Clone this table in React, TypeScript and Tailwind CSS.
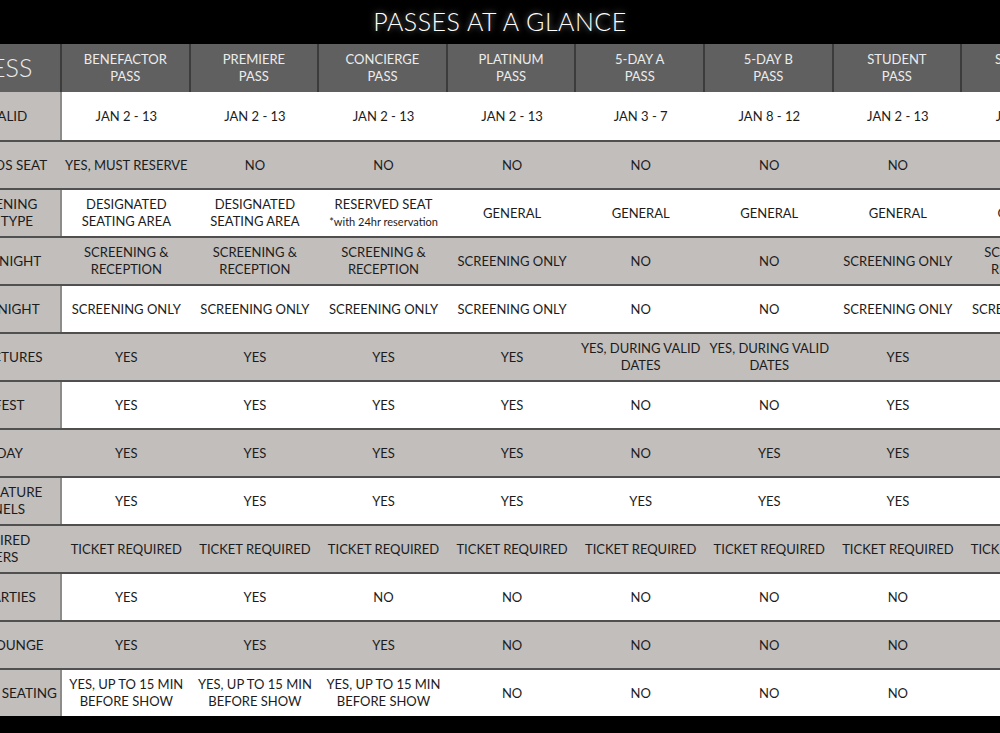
import React from 'react';

type Cell = string | { main: string; note: string };

const passes = [
  ['BENEFACTOR', 'PASS'],
  ['PREMIERE', 'PASS'],
  ['CONCIERGE', 'PASS'],
  ['PLATINUM', 'PASS'],
  ['5-DAY A', 'PASS'],
  ['5-DAY B', 'PASS'],
  ['STUDENT', 'PASS'],
  ['SPONSOR', 'PASS'],
];

// pad: nudges the label inside the (cropped) first column
const rows: { label: string; pad: string; cells: Cell[] }[] = [
  { label: 'DATES VALID', pad: 'pr-[16px]', cells: ['JAN 2 - 13', 'JAN 2 - 13', 'JAN 2 - 13', 'JAN 2 - 13', 'JAN 3 - 7', 'JAN 8 - 12', 'JAN 2 - 13', 'JAN 2 - 13'] },
  { label: 'HOLDS SEAT', pad: 'pl-[24px]', cells: ['YES, MUST RESERVE', 'NO', 'NO', 'NO', 'NO', 'NO', 'NO', 'NO'] },
  {
    label: 'SCREENING\nSEAT TYPE',
    pad: 'pl-[12px]',
    cells: [
      'DESIGNATED\nSEATING AREA',
      'DESIGNATED\nSEATING AREA',
      { main: 'RESERVED SEAT', note: '*with 24hr reservation' },
      'GENERAL',
      'GENERAL',
      'GENERAL',
      'GENERAL',
      'GENERAL',
    ],
  },
  { label: 'OPENING NIGHT', pad: 'pr-[14px]', cells: ['SCREENING &\nRECEPTION', 'SCREENING &\nRECEPTION', 'SCREENING &\nRECEPTION', 'SCREENING ONLY', 'NO', 'NO', 'SCREENING ONLY', 'SCREENING &\nRECEPTION'] },
  { label: 'CLOSING NIGHT', pad: 'pr-[12px]', cells: ['SCREENING ONLY', 'SCREENING ONLY', 'SCREENING ONLY', 'SCREENING ONLY', 'NO', 'NO', 'SCREENING ONLY', 'SCREENING ONLY'] },
  { label: 'ALL LECTURES', pad: 'pl-[4px]', cells: ['YES', 'YES', 'YES', 'YES', 'YES, DURING VALID\nDATES', 'YES, DURING VALID\nDATES', 'YES', 'YES'] },
  { label: 'FILM FEST', pad: 'pr-[4px]', cells: ['YES', 'YES', 'YES', 'YES', 'NO', 'NO', 'YES', 'YES'] },
  { label: 'FAMILY DAY', pad: 'pr-[20px]', cells: ['YES', 'YES', 'YES', 'YES', 'NO', 'YES', 'YES', 'YES'] },
  { label: 'ALL FEATURE\nPANELS', pad: 'pl-[13px]', cells: ['YES', 'YES', 'YES', 'YES', 'YES', 'YES', 'YES', 'YES'] },
  { label: 'GET INSPIRED\nSPEAKERS', pad: 'pr-[18px]', cells: Array(8).fill('TICKET REQUIRED') },
  { label: 'PARTIES', pad: 'pl-[32px]', cells: ['YES', 'YES', 'NO', 'NO', 'NO', 'NO', 'NO', 'NO'] },
  { label: 'LOUNGE', pad: 'pl-[42px]', cells: ['YES', 'YES', 'YES', 'NO', 'NO', 'NO', 'NO', 'NO'] },
  { label: 'PRIORITY SEATING', pad: 'pl-[8px]', cells: ['YES, UP TO 15 MIN\nBEFORE SHOW', 'YES, UP TO 15 MIN\nBEFORE SHOW', 'YES, UP TO 15 MIN\nBEFORE SHOW', 'NO', 'NO', 'NO', 'NO', 'NO'] },
];

const font = "font-['Lato','Liberation_Sans',sans-serif]";

function CellBody({ cell }: { cell: Cell }) {
  if (typeof cell === 'string') {
    return <span className="whitespace-pre-line">{cell}</span>;
  }
  return (
    <span className="flex flex-col items-center">
      <span>{cell.main}</span>
      <span className="text-[11px] tracking-normal">{cell.note}</span>
    </span>
  );
}

export default function App() {
  return (
    <div className={`min-h-screen w-full overflow-hidden bg-black ${font}`}>
      <div className="flex h-[44px] items-center justify-center">
        <h1 className="text-[25px] font-light tracking-[0.02em] text-white [text-shadow:0_0_6px_rgba(255,255,255,0.55)]">
          PASSES AT A GLANCE
        </h1>
      </div>

      <div className="ml-[-72px] w-[1170px]">
        {/* header */}
        <div className="grid h-[48px] grid-cols-[134px_repeat(8,128.6px)] bg-[#606060] text-[#ececec]">
          <div className="flex items-center justify-center border-r-2 border-[#3c3c3c] pr-[14px] text-[25px] font-light">
            ACCESS
          </div>
          {passes.map((p) => (
            <div
              key={p[0]}
              className="flex flex-col items-center justify-center border-r-2 border-[#3c3c3c] text-[13px] leading-[17px]"
            >
              <span>{p[0]}</span>
              <span>{p[1]}</span>
            </div>
          ))}
        </div>

        {rows.map((r, i) => {
          const gray = i % 2 === 1;
          return (
            <div
              key={r.label}
              className={`grid h-[48px] grid-cols-[134px_repeat(8,128.6px)] text-[13px] leading-[17px] text-[#1c1c1c] ${
                i > 0 ? 'border-t-2 border-[#505050]' : ''
              } ${gray ? 'bg-[#c1bebc]' : 'bg-white'}`}
            >
              <div
                className={`flex items-center justify-center whitespace-pre-line bg-[#c1bebc] text-center text-[13.5px] ${r.pad} ${
                  gray ? '' : 'border-r-2 border-[#8e8c8a]'
                }`}
              >
                {r.label}
              </div>
              {r.cells.map((c, j) => (
                <div key={j} className="flex items-center justify-center text-center">
                  <CellBody cell={c} />
                </div>
              ))}
            </div>
          );
        })}
      </div>
    </div>
  );
}
